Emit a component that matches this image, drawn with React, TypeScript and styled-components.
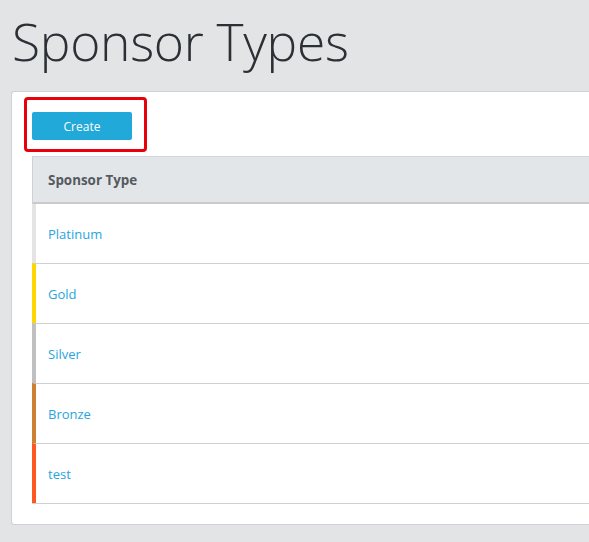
import styled, { createGlobalStyle } from 'styled-components'

const GlobalStyle = createGlobalStyle`
  html, body {
    margin: 0;
    padding: 0;
    background: #e3e4e6;
    overflow: hidden;
  }
  body {
    font-family: "Open Sans", "Noto Sans", sans-serif;
  }
`

const Page = styled.div`
  width: 620px;
  padding: 0 0 0 11px;
`

const Title = styled.h1`
  margin: 0;
  padding: 3px 0 0 1px;
  height: 88px;
  font-family: "Open Sans", "Noto Sans", sans-serif;
  font-weight: 300;
  font-size: 51.5px;
  line-height: 76px;
  color: #2a3035;
  letter-spacing: -0.3px;
`

const Card = styled.section`
  background: #fff;
  border: 1px solid #cfd1d4;
  border-right: none;
  border-radius: 3px 0 0 3px;
  padding: 5px 0 20px 12px;
`

const Highlight = styled.div`
  display: inline-block;
  border: 3px solid #e8000b;
  border-radius: 4px;
  padding: 12px 12px 9px 5px;
  margin-bottom: 4px;
`

const Button = styled.button`
  display: block;
  width: 100px;
  height: 28px;
  border: none;
  border-radius: 2px;
  background: #21a9d9;
  color: #fff;
  font-family: "Open Sans", "Noto Sans", sans-serif;
  font-size: 12px;
  padding: 0;
  cursor: pointer;
`

const Table = styled.div`
  margin-left: 8px;
  border-left: 1px solid #cfd1d4;
  border-bottom: 1px solid #cfd1d4;
`

const HeaderRow = styled.div`
  height: 45px;
  display: flex;
  align-items: center;
  padding-left: 15px;
  background: #e3e6e9;
  border-top: 1px solid #d3d5d8;
  border-bottom: 2px solid #c8cacd;
  font-size: 13.4px;
  font-weight: 700;
  color: #555a60;
`

const Row = styled.div<{ $accent: string }>`
  height: 59px;
  display: flex;
  align-items: center;
  padding-left: 12px;
  border-left: 4px solid ${p => p.$accent};
  margin-left: -1px;
  & + & {
    border-top: 1px solid #cfd1d4;
  }
`

const Link = styled.a`
  color: #26a6dc;
  font-size: 13px;
  text-decoration: none;
`

const sponsors = [
  { name: 'Platinum', color: '#e5e4e2' },
  { name: 'Gold', color: '#ffd700' },
  { name: 'Silver', color: '#c0c0c0' },
  { name: 'Bronze', color: '#cd7f32' },
  { name: 'test', color: '#ff5722' },
]

const App = () => {
  return (
    <>
      <GlobalStyle />
      <Page>
        <Title>Sponsor Types</Title>
        <Card>
          <Highlight>
            <Button>Create</Button>
          </Highlight>
          <Table>
            <HeaderRow>Sponsor Type</HeaderRow>
            {sponsors.map(s => (
              <Row key={s.name} $accent={s.color}>
                <Link href="#">{s.name}</Link>
              </Row>
            ))}
          </Table>
        </Card>
      </Page>
    </>
  )
}

export default App
